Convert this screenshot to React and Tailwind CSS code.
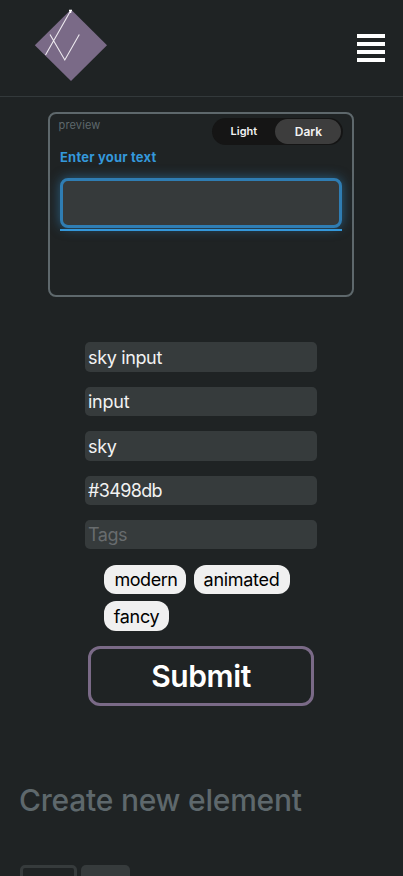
const fields = [
  { value: 'sky input', style: 'mb-[15px] h-[30px] tracking-[-0.35px]' },
  { value: 'input', style: 'mb-[15px] h-[29px] tracking-[-0.25px]' },
  { value: 'sky', style: 'mb-[15px] h-[30px] tracking-[-0.3px]' },
  { value: '#3498db', style: 'mb-[15px] h-[29px] tracking-[-0.65px]' },
  { value: '', placeholder: 'Tags', style: 'h-[29px] tracking-[-0.5px]' },
];

function Header() {
  return (
    <header className="flex h-[97px] shrink-0 items-start justify-between border-b border-[#33393b] pl-[34px] pr-[18px]">
      <svg className="mt-[9px] h-[73px] w-[74px]" viewBox="34 9 74 73" fill="none">
        <path d="M71 9.5 107 45.2 71 81 34.8 45.2Z" fill="#7a6a87" />
        <path d="M45.5 55 70.5 11M50 34.5 64.8 60 79.3 34.5" stroke="#eeeaf0" strokeWidth="1.1" />
        <path d="M69 10.5H72M70.5 10.5V13" stroke="#fff" strokeWidth="1.5" />
      </svg>
      <button aria-label="Menu" className="mt-[34px] flex w-7 flex-col gap-1">
        <span className="h-1 w-full bg-white" />
        <span className="h-1 w-full bg-white" />
        <span className="h-1 w-full bg-white" />
        <span className="h-1 w-full bg-white" />
      </button>
    </header>
  );
}

function Preview() {
  return (
    <section className="ml-12 mt-[15px] h-[185px] w-[306.4px] shrink-0 rounded-lg border-2 border-[#5e686c] px-[10px]">
      <div className="flex justify-between">
        <span className="-ml-[1.5px] mt-[3px] text-[11px] leading-4 tracking-[0.15px] text-[#5e686c]">preview</span>
        <div className="-mr-[1px] mt-[4px] flex h-[27px] w-[131px] items-center rounded-full bg-[#151515] pr-[1px] text-[11px] font-semibold text-[#f2f2f2]">
          <span className="w-[63px] text-center">Light</span>
          <span className="flex h-[25px] w-[66px] items-center justify-center rounded-full bg-[#3d3d3d] text-[12px]">Dark</span>
        </div>
      </div>
      <label className="mt-[2px] block text-[13px] font-bold leading-5 tracking-[0.2px] text-[#3498db]">Enter your text</label>
      <div className="mt-[11px] h-[50px] w-[282.4px] rounded-lg border-[3px] border-[#2f7db3] bg-[#363a3b] shadow-[0_0_12px_rgba(52,152,219,0.5)]" />
      <div className="mt-[1px] h-[2px] w-[282.4px] bg-[#3498db]" />
    </section>
  );
}

export default function App() {
  return (
    <main className="flex h-[876px] w-full flex-col overflow-hidden bg-[#1f2324] font-['Inter',sans-serif]">
      <Header />
      <Preview />
      <form className="mt-[45.3px] flex flex-col" onSubmit={(e) => e.preventDefault()}>
        {fields.map((f, i) => (
          <input
            key={i}
            defaultValue={f.value}
            placeholder={f.placeholder}
            className={`ml-[85.4px] w-[231.6px] rounded-[5px] bg-[#363b3c] px-[2.6px] text-[18px] text-[#f2f2f2] placeholder:text-[#686c6e] ${f.style}`}
          />
        ))}
        <div className="ml-[104px] mt-[15.7px] flex w-[200px] flex-wrap gap-x-[7.5px] gap-y-[7px] text-[18px] tracking-[-0.3px] text-black">
          <span className="flex h-[29.5px] w-[82px] items-center justify-center rounded-[12px] bg-[#f0f0f0] pl-0.5 tracking-[-0.45px]">modern</span>
          <span className="flex h-[29.5px] w-[96px] items-center justify-center rounded-[12px] bg-[#f0f0f0]">animated</span>
          <span className="flex h-[29.5px] w-[65px] items-center justify-center rounded-[12px] bg-[#f0f0f0]">fancy</span>
        </div>
        <button className="ml-[88px] mt-[15px] h-[60px] w-[226px] rounded-[12px] border-[3px] border-[#7a6a87] text-[30px] font-semibold leading-none tracking-[-0.4px] text-white">
          Submit
        </button>
      </form>
      <h2 className="ml-[19px] mt-[74px] text-[30px] font-medium leading-10 tracking-[-0.23px] text-[#5e686c]">Create new element</h2>
      <div className="ml-5 mt-[45px] flex gap-1">
        <div className="h-10 w-[57px] rounded-t-[5px] border-[3px] border-[#363b3c]" />
        <div className="h-10 w-[49px] rounded-t-[5px] bg-[#363b3c]" />
      </div>
    </main>
  );
}
